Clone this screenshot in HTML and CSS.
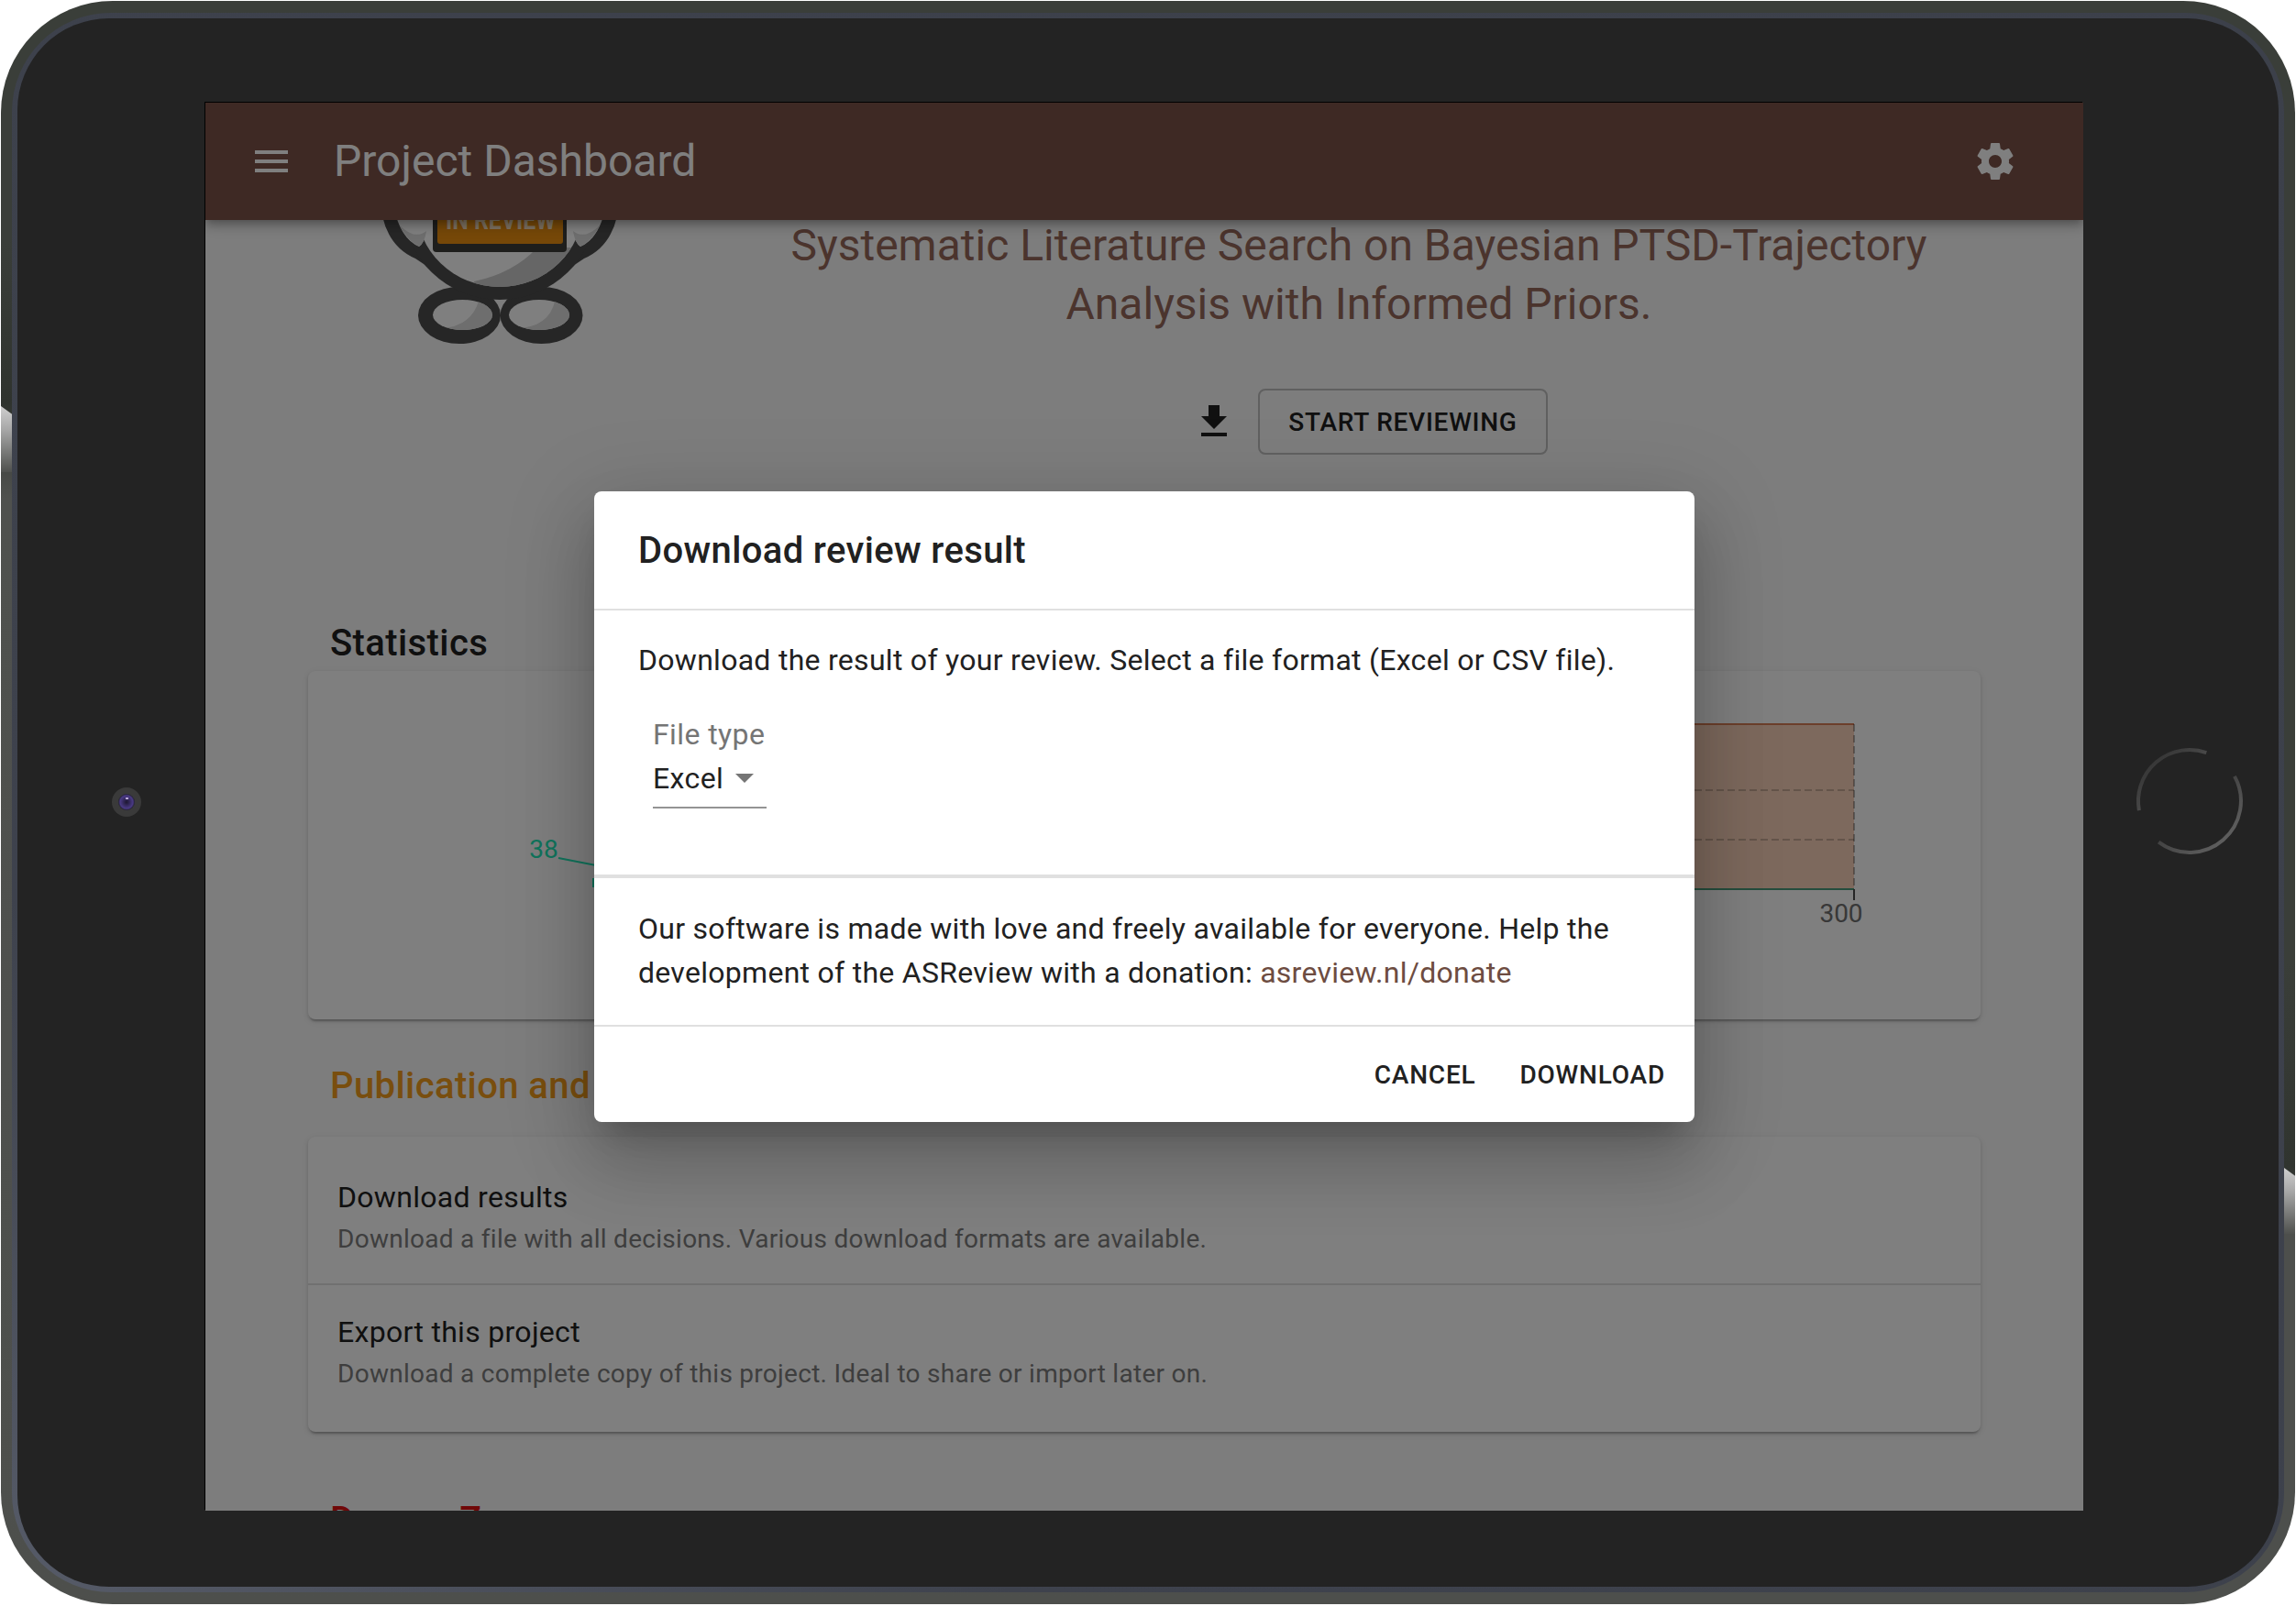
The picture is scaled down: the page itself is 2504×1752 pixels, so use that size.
FILE: index.html
```html
<!DOCTYPE html>
<html lang="en">
<head>
<meta charset="utf-8">
<title>Project Dashboard</title>
<link rel="stylesheet" href="styles.css">
</head>
<body>
<div class="shell">
  <span class="side-btn side-left"></span>
  <span class="side-btn side-right"></span>
  <div class="ring">
    <div class="bezel">
      <span class="camera"><span class="lens"><span class="glint"></span></span></span>
      <svg class="home" viewBox="0 0 120 120" aria-hidden="true">
        <defs>
          <linearGradient id="hb" x1="0" y1="0" x2="1" y2="1">
            <stop offset="0" stop-color="#2c2c2c"/>
            <stop offset="0.45" stop-color="#444"/>
            <stop offset="1" stop-color="#6a6a6a"/>
          </linearGradient>
        </defs>
        <path d="M109 32.900 A56 56 0 0 1 26.200 104.600" fill="none" stroke="url(#hb)" stroke-width="4"/>
        <path d="M4.900 70.200 A56 56 0 0 1 78.300 7.100" fill="none" stroke="url(#hb)" stroke-width="4"/>
      </svg>

      <main class="screen">
        <header class="appbar">
          <button class="icon-btn" aria-label="menu">
            <svg class="icon" viewBox="0 0 24 24"><path d="M3 18h18v-2H3v2zm0-5h18v-2H3v2zm0-7v2h18V6H3z"/></svg>
          </button>
          <h1 class="appbar-title">Project Dashboard</h1>
          <button class="icon-btn" aria-label="settings">
            <svg class="icon" viewBox="0 0 24 24"><path d="M19.43 12.98c.04-.32.07-.64.07-.98s-.03-.66-.07-.98l2.11-1.65c.19-.15.24-.42.12-.64l-2-3.46c-.12-.22-.39-.3-.61-.22l-2.49 1c-.52-.4-1.08-.73-1.69-.98l-.38-2.65C14.46 2.18 14.25 2 14 2h-4c-.25 0-.46.18-.49.42l-.38 2.65c-.61.25-1.17.59-1.69.98l-2.49-1c-.23-.09-.49 0-.61.22l-2 3.46c-.13.22-.07.49.12.64l2.11 1.65c-.04.32-.07.65-.07.98s.03.66.07.98l-2.11 1.65c-.19.15-.24.42-.12.64l2 3.46c.12.22.39.3.61.22l2.49-1c.52.4 1.08.73 1.69.98l.38 2.65c.03.24.24.42.49.42h4c.25 0 .46-.18.49-.42l.38-2.65c.61-.25 1.17-.59 1.69-.98l2.49 1c.23.09.49 0 .61-.22l2-3.46c.12-.22.07-.49-.12-.64l-2.11-1.65zM12 15.5c-1.93 0-3.5-1.57-3.5-3.5s1.57-3.5 3.5-3.5 3.5 1.57 3.5 3.5-1.57 3.5-3.5 3.5z"/></svg>
          </button>
        </header>

        <div class="page">
          <section class="hero">
            <svg class="logo" viewBox="336 136 468 260" aria-hidden="true">
              <defs>
                <clipPath id="bodyclip"><ellipse cx="545" cy="225" rx="91" ry="88"/></clipPath>
                <clipPath id="hole1"><ellipse cx="504.500" cy="343.500" rx="32.500" ry="16.500"/></clipPath>
                <clipPath id="hole2"><ellipse cx="588" cy="343.500" rx="33" ry="16.500"/></clipPath>
              </defs>
              <path class="ink" d="M417 236 Q425 270 453 282 L480 300 L610 300 L637 282 Q665 270 673 236 Z"/>
              <ellipse class="ink" cx="501" cy="344" rx="45" ry="31"/>
              <ellipse class="ink" cx="590.500" cy="344" rx="45" ry="31"/>
              <ellipse class="ink" cx="545" cy="225" rx="105" ry="102"/>
              <ellipse class="paper" cx="545" cy="225" rx="91" ry="88"/>
              <path class="shade" clip-path="url(#bodyclip)" d="M517 307 Q560 298 586 270 L640 270 L640 320 L517 320 Z"/>
              <path class="paper" d="M432 236 Q440 262 457 269 Q467 262 465 236 Z"/>
              <path class="shade-soft" d="M436 246 Q444 262 457 269 Q463 265 465 252 Q452 262 436 246 Z"/>
              <path class="paper" d="M658 236 Q650 262 633 269 Q623 262 625 236 Z"/>
              <path class="shade-soft" d="M654 246 Q646 262 633 269 Q627 265 625 252 Q638 262 654 246 Z"/>
              <rect class="ink-deep" x="472" y="200" width="146" height="75" rx="4"/>
              <rect class="banner" x="477" y="180" width="137" height="86" rx="3"/>
              <text class="banner-text" x="486" y="250" textLength="120" lengthAdjust="spacingAndGlyphs">IN REVIEW</text>
              <ellipse class="paper" cx="504.500" cy="343.500" rx="32.500" ry="16.500"/>
              <path class="shade-soft" clip-path="url(#hole1)" d="M478 358 Q515 358 523 325 L540 325 L540 365 L478 365 Z"/>
              <ellipse class="paper" cx="588" cy="343.500" rx="33" ry="16.500"/>
              <path class="shade-soft" clip-path="url(#hole2)" d="M562 358 Q600 358 606 325 L625 325 L625 365 L562 365 Z"/>
            </svg>
            <div class="hero-main">
              <h2 class="project-title">Systematic Literature Search on Bayesian PTSD-Trajectory Analysis with Informed Priors.</h2>
              <div class="hero-actions">
                <button class="icon-btn dark" aria-label="download">
                  <svg class="icon" viewBox="0 0 24 24"><path d="M19 9h-4V3H9v6H5l7 7 7-7zM5 18v2h14v-2H5z"/></svg>
                </button>
                <button class="outline-btn">Start reviewing</button>
              </div>
            </div>
          </section>

          <section class="section stats">
            <h3 class="section-title">Statistics</h3>
            <div class="card chart-card">
              <svg class="chart" viewBox="336 732 1824 380" aria-hidden="true">
                <rect class="area" x="660" y="790" width="1362" height="180"/>
                <line class="area-top" x1="660" y1="790" x2="2022" y2="790"/>
                <line class="grid" x1="660" y1="862" x2="2022" y2="862"/>
                <line class="grid" x1="660" y1="916" x2="2022" y2="916"/>
                <line class="grid-edge" x1="2022" y1="790" x2="2022" y2="970"/>
                <line class="base" x1="660" y1="970" x2="2022" y2="970"/>
                <line class="tick" x1="2022" y1="970" x2="2022" y2="982"/>
                <text class="tick-label" x="2008" y="1006" text-anchor="middle">300</text>
                <text class="green-label" x="593" y="936" text-anchor="middle">38</text>
                <line class="leader" x1="609" y1="936" x2="650" y2="944"/>
                <line class="leader" x1="647" y1="958" x2="647" y2="968"/>
              </svg>
            </div>
          </section>

          <section class="section publish">
            <h3 class="section-title amber">Publication and Export</h3>
            <div class="card list-card">
              <div class="list-item">
                <p class="item-title">Download results</p>
                <p class="item-sub">Download a file with all decisions. Various download formats are available.</p>
              </div>
              <div class="list-item">
                <p class="item-title">Export this project</p>
                <p class="item-sub">Download a complete copy of this project. Ideal to share or import later on.</p>
              </div>
            </div>
          </section>

          <section class="section danger">
            <h3 class="section-title red">Danger Zone</h3>
          </section>
        </div>

        <div class="backdrop">
          <div class="dialog" role="dialog">
            <h2 class="dialog-title">Download review result</h2>
            <div class="dialog-body">
              <p class="dialog-text">Download the result of your review. Select a file format (Excel or CSV file).</p>
              <div class="field">
                <span class="field-label">File type</span>
                <span class="field-select">Excel<svg class="caret" viewBox="0 0 20 10"><path d="M0 0h20L10 10z"/></svg></span>
              </div>
            </div>
            <div class="dialog-note">
              <p class="dialog-text">Our software is made with love and freely available for everyone. Help the development of the ASReview with a donation: <a class="link" href="#">asreview.nl/donate</a></p>
            </div>
            <div class="dialog-actions">
              <button class="text-btn">Cancel</button>
              <button class="text-btn">Download</button>
            </div>
          </div>
        </div>
      </main>
    </div>
  </div>
</div>
</body>
</html>
```

FILE: styles.css
```css
* { box-sizing: border-box; }
html, body { margin: 0; padding: 0; background: #fff; }
body { width: 2504px; height: 1752px; overflow: hidden; font-family: Roboto, "Liberation Sans", sans-serif; color: #212121; }
h1, h2, h3, p { margin: 0; }
button { font-family: inherit; border: 0; background: none; padding: 0; }

.shell {
  position: relative;
  width: 2502px;
  height: 1749px;
  margin: 1px 1px 2px;
  padding: 13px 12px 13px 12px;
  border-radius: 122px;
  background-repeat: no-repeat;
  background-size: 50% 100%, 50% 100%;
  background-position: 0 0, 100% 0;
  background-image:
    linear-gradient(180deg, #3a3e39 0, #3a3e39 15%, #2f332e 25%, #4f514e 31%, #4d4f4c 100%),
    linear-gradient(180deg, #3a3e39 0, #3a3e39 60%, #30342f 72.7%, #4d4f4c 76%, #4d4f4c 100%);
}
.side-btn { position: absolute; width: 12px; height: 72px; background: linear-gradient(180deg, #cfcfcf 0, #a8a8a8 35%, #4f514e 100%); clip-path: polygon(0 0, 100% 12%, 100% 100%, 0 100%); }
.side-left { left: 0; top: 442px; }
.side-right { right: 0; top: 1273px; }

.ring {
  height: 100%;
  padding: 6px;
  border-radius: 108px;
  background: linear-gradient(to top right, #565b68 0, #3e424d 22%, #3c404a 100%);
}
.bezel {
  position: relative;
  height: 100%;
  padding: 92px 213px 84px 205px;
  border-radius: 100px;
  background: #232323;
}
.camera { position: absolute; left: 103px; top: 839px; width: 32px; height: 32px; border-radius: 50%; background: #3a3a3a; display: flex; align-items: center; justify-content: center; }
.lens { width: 18px; height: 18px; border-radius: 50%; background: radial-gradient(circle at 50% 50%, #1d1730 0, #4a3a85 55%, #1d1d24 72%); display: flex; justify-content: center; padding-top: 4px; }
.glint { width: 3px; height: 2px; background: #b9a8d8; }
.home { position: absolute; left: 2309px; top: 794px; width: 120px; height: 120px; }

.screen {
  position: relative;
  width: 2048px;
  height: 1536px;
  overflow: hidden;
  background: #fafafa;
  box-shadow: -1px -1px 0 #000;
}

.appbar {
  position: relative;
  z-index: 2;
  display: flex;
  align-items: center;
  height: 128px;
  padding: 0 72px 0 48px;
  color: #fff;
  background: #7c5248;
  box-shadow: 0 4px 8px -2px rgba(0,0,0,.2), 0 8px 10px 0 rgba(0,0,0,.14), 0 2px 20px 0 rgba(0,0,0,.12);
}
.appbar-title { flex: 1; margin-left: 44px; font-size: 48px; font-weight: 400; line-height: 64px; }
.icon-btn { display: block; width: 48px; height: 48px; color: inherit; flex: none; }
.icon { display: block; width: 48px; height: 48px; fill: currentColor; }

.page { margin-top: -104px; padding: 0 112px; }
.hero { display: grid; grid-template-columns: 468px 1fr; height: 532px; }
.logo { display: block; width: 468px; height: 260px; }
.ink { fill: #4c4c4c; }
.ink-deep { fill: #3c3c38; }
.paper { fill: #ffffff; }
.shade { fill: #cccccc; }
.shade-soft { fill: #dcdcdc; }
.banner { fill: #ec9010; }
.banner-text { font-family: Roboto, sans-serif; font-size: 30px; font-weight: 700; fill: #ffffff; fill-opacity: .75; }

.hero-main { padding-top: 100px; display: flex; flex-direction: column; align-items: center; }
.project-title { width: 1280px; font-size: 48px; line-height: 64px; font-weight: 400; text-align: center; color: #96685a; }
.hero-actions { display: flex; align-items: center; margin-top: 48px; }
.hero-actions .icon-btn { width: 96px; height: 96px; padding: 24px; }
.outline-btn { height: 72px; width: 316px; border: 2px solid rgba(0,0,0,.23); border-radius: 8px; font-size: 28px; font-weight: 500; letter-spacing: .75px; text-transform: uppercase; color: #212121; }
.dark { color: #212121; }

.section-title { font-size: 40px; line-height: 61px; padding-top: 3px; font-weight: 500; padding-left: 24px; letter-spacing: .4px; color: #212121; }
.amber { color: #f29c1c; }
.red { color: #e01010; }
.publish { margin-top: 39px; }
.danger { margin-top: 63px; }

.card { background: #fff; border-radius: 8px; box-shadow: 0 4px 2px -2px rgba(0,0,0,.2), 0 2px 4px 0 rgba(0,0,0,.14), 0 2px 10px 0 rgba(0,0,0,.06); }
.chart-card { height: 380px; }
.chart { display: block; width: 1824px; height: 380px; }
.area { fill: #fbd3bb; }
.area-top { stroke: #d87f57; stroke-width: 2; }
.grid { stroke: rgba(0,0,0,.2); stroke-width: 2; stroke-dasharray: 8 4; }
.grid-edge { stroke: rgba(0,0,0,.3); stroke-width: 2; stroke-dasharray: 8 4; }
.base { stroke: #4a9b7a; stroke-width: 2; }
.tick { stroke: #4a4a4a; stroke-width: 2; }
.tick-label { font-size: 28px; fill: #717171; font-family: Roboto, sans-serif; }
.green-label { font-size: 28px; fill: #22e8b8; font-family: Roboto, sans-serif; }
.leader { stroke: #22e8b8; stroke-width: 2; }

.publish .section-title { margin-bottom: 25px; }
.list-card { height: 322px; }
.list-item { padding: 42px 32px 0; height: 160px; }
.list-item + .list-item { border-top: 2px solid #e0e0e0; height: 162px; padding-top: 27px; }
.item-title { font-size: 32px; line-height: 48px; letter-spacing: .3px; }
.item-sub { font-size: 28px; line-height: 40px; letter-spacing: .28px; color: #7c7c7c; margin-top: 2px; }

.backdrop { position: absolute; inset: 0; z-index: 5; display: flex; align-items: center; justify-content: center; background: rgba(0,0,0,.5); }
.dialog { width: 1200px; height: 688px; background: #fff; border-radius: 8px; display: flex; flex-direction: column; box-shadow: 0 22px 30px -14px rgba(0,0,0,.2), 0 48px 76px 6px rgba(0,0,0,.14), 0 18px 92px 16px rgba(0,0,0,.12); }
.dialog-title { height: 130px; padding: 33px 48px 0; font-size: 40px; line-height: 64px; font-weight: 500; letter-spacing: .35px; border-bottom: 2px solid #e0e0e0; }
.dialog-body { height: 292px; padding: 30px 48px 0; border-bottom: 4px solid #e0e0e0; }
.dialog-text { font-size: 32px; line-height: 48px; letter-spacing: .28px; color: #212121; }
.field { display: inline-flex; flex-direction: column; margin: 35px 0 0 16px; width: 124px; letter-spacing: .4px; }
.field-label { font-size: 32px; line-height: 45px; color: #757575; }
.field-select { display: flex; align-items: center; font-size: 32px; line-height: 48px; height: 58px; color: #212121; border-bottom: 2px solid #949494; padding-bottom: 6px; }
.caret { width: 20px; height: 10px; margin-left: 13px; fill: #757575; }
.dialog-note { height: 162px; padding: 31px 48px 0; border-bottom: 2px solid #e0e0e0; }
.link { color: #6d4c41; text-decoration: none; }
.dialog-actions { flex: 1; display: flex; align-items: center; justify-content: flex-end; gap: 16px; padding: 0 16px; }
.text-btn { height: 72px; padding: 0 16px; font-size: 28px; font-weight: 500; letter-spacing: .8px; text-transform: uppercase; color: #212121; }
```
